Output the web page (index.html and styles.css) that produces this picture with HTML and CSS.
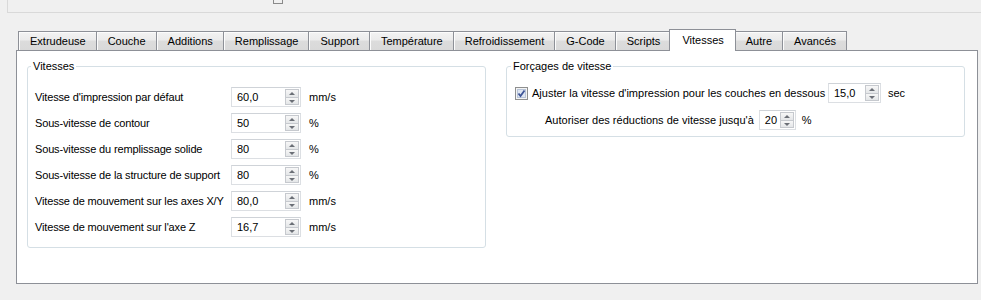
FILE: index.html
```html
<!DOCTYPE html>
<html lang="fr">
  <head>
    <meta charset="UTF-8" />
    <title>Vitesses</title>
    <link rel="stylesheet" href="styles.css">
  </head>
  <body>
    <div class="top">
      <span class="top-icon"></span>
    </div>

    <div class="tabs">
      <span class="tab">Extrudeuse</span>
      <span class="tab">Couche</span>
      <span class="tab">Additions</span>
      <span class="tab">Remplissage</span>
      <span class="tab">Support</span>
      <span class="tab">Température</span>
      <span class="tab">Refroidissement</span>
      <span class="tab">G-Code</span>
      <span class="tab">Scripts</span>
      <span class="tab active">Vitesses</span>
      <span class="tab">Autre</span>
      <span class="tab">Avancés</span>
    </div>

    <div class="pane">
      <fieldset class="group speeds">
        <legend>Vitesses</legend>
        <div class="form">
          <span class="label">Vitesse d'impression par défaut</span>
          <span class="spin"><span class="value">60,0</span><span class="arrows"><span class="up"></span><span class="down"></span></span></span>
          <span class="unit">mm/s</span>

          <span class="label">Sous-vitesse de contour</span>
          <span class="spin"><span class="value">50</span><span class="arrows"><span class="up"></span><span class="down"></span></span></span>
          <span class="unit">%</span>

          <span class="label">Sous-vitesse du remplissage solide</span>
          <span class="spin"><span class="value">80</span><span class="arrows"><span class="up"></span><span class="down"></span></span></span>
          <span class="unit">%</span>

          <span class="label">Sous-vitesse de la structure de support</span>
          <span class="spin"><span class="value">80</span><span class="arrows"><span class="up"></span><span class="down"></span></span></span>
          <span class="unit">%</span>

          <span class="label">Vitesse de mouvement sur les axes X/Y</span>
          <span class="spin"><span class="value">80,0</span><span class="arrows"><span class="up"></span><span class="down"></span></span></span>
          <span class="unit">mm/s</span>

          <span class="label">Vitesse de mouvement sur l'axe Z</span>
          <span class="spin"><span class="value">16,7</span><span class="arrows"><span class="up"></span><span class="down"></span></span></span>
          <span class="unit">mm/s</span>
        </div>
      </fieldset>

      <fieldset class="group overrides">
        <legend>Forçages de vitesse</legend>
        <div class="line">
          <span class="check">
            <svg width="13" height="13" viewBox="0 0 13 13">
              <rect x="0.5" y="0.5" width="12" height="12" fill="#f4f4f4" stroke="#8e8f8f" />
              <rect x="2.5" y="2.5" width="8" height="8" fill="#dfe6f2" stroke="#b8c4d8" />
              <path d="M3.5 6.5 L5.5 9 L9.5 3.5" fill="none" stroke="#3d5497" stroke-width="1.8" />
            </svg>
          </span>
          <span class="check-label">Ajuster la vitesse d'impression pour les couches en dessous</span>
          <span class="spin mid"><span class="value">15,0</span><span class="arrows"><span class="up"></span><span class="down"></span></span></span>
          <span class="unit">sec</span>
        </div>
        <div class="line indent">
          <span>Autoriser des réductions de vitesse jusqu'à</span>
          <span class="spin small"><span class="value">20</span><span class="arrows"><span class="up"></span><span class="down"></span></span></span>
          <span class="unit">%</span>
        </div>
      </fieldset>
    </div>
  </body>
</html>
```

FILE: styles.css
```css
body {
  margin: 0;
  padding: 0;
  height: 300px;
  overflow: hidden;
  background-color: #f0f0f0;
  font-family: "Liberation Sans", Arial, sans-serif;
  font-size: 11px;
  color: #000;
}

.top {
  height: 12px;
  margin-left: 7px;
  border-left: 1px solid #d9d9d9;
  border-bottom: 1px solid #d9d9d9;
  position: relative;
  overflow: hidden;
}
.top-icon {
  position: absolute;
  left: 265px;
  top: -6px;
  width: 8px;
  height: 8px;
  border: 1px solid #8a8a8a;
}

.tabs {
  display: flex;
  align-items: flex-end;
  height: 21px;
  margin: 16px 0 0 16px;
  padding-left: 2px;
}

.tab {
  height: 19px;
  box-sizing: border-box;
  padding: 0 10px 0 11px;
  line-height: 18px;
  white-space: nowrap;
  border: 1px solid #8d9097;
  border-bottom: none;
  margin-left: -1px;
  background: linear-gradient(#f3f3f3, #ebebeb 45%, #dcdcdc 50%, #d9d9d9);
  box-shadow: inset 1px 1px 0 #fcfcfc;
}
.tab:first-child {
  margin-left: 0;
}
.tab.active {
  height: 22px;
  margin-bottom: -1px;
  line-height: 20px;
  position: relative;
  z-index: 1;
  background: #fff;
  box-shadow: none;
  padding: 0 11px 0 12px;
  margin-left: -2px;
  margin-right: -1px;
}

.pane {
  box-sizing: border-box;
  width: 962px;
  height: 234px;
  margin-left: 16px;
  border: 1px solid #8d9097;
  background: #fff;
  padding: 8px 12px 0 10px;
  display: grid;
  grid-template-columns: 1fr 1fr;
  column-gap: 20px;
  align-items: start;
}

.group {
  margin: 0;
  border: 1px solid #d5dfe5;
  border-radius: 3px;
  min-width: 0;
}
.group legend {
  padding: 0 2px;
  margin-left: -4px;
  line-height: 14px;
}

.speeds {
  padding: 14px 7px 10px;
}
.form {
  display: grid;
  grid-template-columns: 188px 70px auto;
  row-gap: 6px;
  column-gap: 8px;
  align-items: center;
}
.label {
  white-space: nowrap;
  letter-spacing: -0.15px;
}

.spin {
  display: flex;
  box-sizing: border-box;
  height: 20px;
  width: 70px;
  border: 1px solid #dcdfe3;
  border-top-color: #cfd3d8;
  background: #fff;
  padding: 1px;
}
.spin.mid {
  width: 53px;
}
.spin.small {
  width: 37px;
}
.spin .value {
  flex: 1;
  line-height: 16px;
  padding-left: 4px;
}
.arrows {
  display: flex;
  flex-direction: column;
  width: 14px;
}
.arrows span {
  flex: 1;
  border: 1px solid #c6c9ce;
  background: linear-gradient(#f7f7f7, #e4e6e8);
  position: relative;
}
.arrows .up {
  border-bottom-width: 0;
}
.arrows span::after {
  content: "";
  position: absolute;
  left: 3px;
  border-left: 3px solid transparent;
  border-right: 3px solid transparent;
}
.arrows .up::after {
  top: 2px;
  border-bottom: 3px solid #6b6f76;
}
.arrows .down::after {
  top: 2px;
  border-top: 3px solid #6b6f76;
}

.overrides {
  padding: 10px 8px 6px;
}
.line {
  display: flex;
  align-items: center;
  height: 20px;
  white-space: nowrap;
}
.line + .line {
  margin-top: 7px;
}
.line .unit {
  margin-left: 7px;
}
.line.indent {
  padding-left: 30px;
  gap: 5px;
}
.line.indent .unit {
  margin-left: 1px;
}
.check {
  display: flex;
  width: 13px;
  height: 13px;
  margin-right: 4px;
}
.check-label {
  width: 296px;
}
```
